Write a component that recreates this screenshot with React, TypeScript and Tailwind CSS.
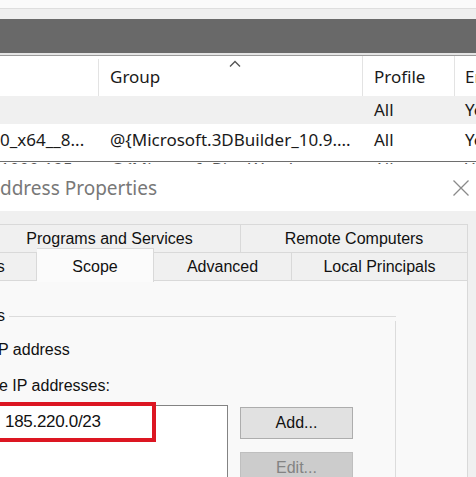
import React from "react";

const seg = "font-['Noto_Sans',sans-serif]";
const dlg = "font-['Liberation_Sans',Arial,sans-serif]";

const rows = [
  { name: "", group: "", profile: "All", enabled: "Yes", bg: "bg-[#f0f0f0]", h: "h-[28px]" },
  { name: "0_x64__8...", group: "@{Microsoft.3DBuilder_10.9....", profile: "All", enabled: "Yes", bg: "bg-white", h: "h-[32px]" },
];

function Cols({ name, group, profile, enabled }: { name: string; group: string; profile: string; enabled: string }) {
  return (
    <>
      <div className="w-[99px] shrink-0 whitespace-nowrap overflow-hidden">{name}</div>
      <div className="w-[264px] shrink-0 pl-[11px] whitespace-nowrap overflow-hidden">{group}</div>
      <div className="w-[92px] shrink-0 pl-[11px] whitespace-nowrap">{profile}</div>
      <div className="shrink-0 pl-[10px] whitespace-nowrap">{enabled}</div>
    </>
  );
}

export default function App() {
  return (
    <div className="w-[476px] h-[477px] overflow-hidden bg-white flex flex-col">
      {/* window chrome above the list */}
      <div className="h-[8px] bg-[#fafafa] shrink-0" />
      <div className="h-px bg-[#dedede] shrink-0" />
      <div className="h-[10px] bg-[#efefef] shrink-0" />
      <div className="h-[34px] bg-[#696969] shrink-0" />
      <div className="h-[2px] bg-[#e4e4e4] shrink-0" />
      <div className="h-px bg-[#9a9a9a] shrink-0" />

      {/* list header */}
      <div className={`h-[40px] shrink-0 flex text-[17px] text-[#1a1a1a] bg-white ${seg}`}>
        <div className="w-[99px] shrink-0 mt-[3px] border-r border-[#e3e3e3]" />
        <div className="w-[264px] shrink-0 pl-[11px] pt-[2px] flex items-center border-r border-[#e3e3e3] relative">
          Group
          <svg className="absolute left-[130px] top-[4px]" width="12" height="7" viewBox="0 0 12 7">
            <path d="M1 6.5 L6 1.5 L11 6.5" fill="none" stroke="#555" strokeWidth="1.4" />
          </svg>
        </div>
        <div className="w-[92px] shrink-0 pl-[11px] pt-[2px] flex items-center border-r border-[#e3e3e3]">Profile</div>
        <div className="shrink-0 pl-[10px] pt-[2px] flex items-center whitespace-nowrap">Enabled</div>
      </div>

      {rows.map((r, i) => (
        <div key={i} className={`${r.h} ${r.bg} shrink-0 flex items-center text-[17px] text-[#1a1a1a] ${seg}`}>
          <Cols {...r} />
        </div>
      ))}

      {/* next row, mostly hidden behind the dialog */}
      <div className="h-[5px] shrink-0 bg-white" />
      <div className="h-px shrink-0 bg-[#6e6e6e]" />
      <div className={`h-[2px] shrink-0 overflow-hidden flex text-[17px] leading-none text-[#555] ${seg}`}>
        <div className="-mt-[2px] flex">
          <Cols name="  1000.195" group="@{Microsoft.BingWeather" profile="All" enabled="Yes" />
        </div>
      </div>
      <div className="h-px shrink-0 bg-white" />

      {/* dialog */}
      <div className="flex-1 flex flex-col bg-[#f0f0f0]">
        <div className="h-[46px] shrink-0 bg-white flex items-center justify-between">
          <span className={`text-[19px] text-[#787878] ${seg}`}>ddress Properties</span>
          <svg className="mr-[7px]" width="16" height="16" viewBox="0 0 16 16">
            <path d="M0.5 0.5 L15.5 15.5 M15.5 0.5 L0.5 15.5" stroke="#8a8a8a" strokeWidth="1.3" />
          </svg>
        </div>

        <div className={`pt-[13px] flex-1 flex flex-col text-[16px] text-[#111] ${dlg}`}>
          {/* back tab row */}
          <div className="h-[28px] shrink-0 flex">
            <div className="-ml-[22px] w-[263px] shrink-0 border border-b-0 border-[#d9d9d9] flex items-center justify-center whitespace-nowrap">
              Programs and Services
            </div>
            <div className="w-[227px] shrink-0 border border-b-0 border-l-0 border-[#d9d9d9] flex items-center justify-center whitespace-nowrap">
              Remote Computers
            </div>
          </div>

          {/* front tab row */}
          <div className="h-[28px] shrink-0 flex items-start">
            <div className="-ml-[167px] w-[204px] h-[28px] shrink-0 border border-b-0 border-[#d9d9d9] flex items-center justify-center whitespace-nowrap">
              Protocols and Ports
            </div>
            <div className="relative z-10 -mt-[4px] w-[117px] h-[34px] shrink-0 bg-[#fbfbfb] border border-b-0 border-l-0 border-[#d9d9d9] flex justify-center pt-[6px]">
              Scope
            </div>
            <div className="w-[138px] h-[28px] shrink-0 border border-b-0 border-l-0 border-[#d9d9d9] flex items-center justify-center">
              Advanced
            </div>
            <div className="w-[176px] h-[28px] shrink-0 border border-b-0 border-l-0 border-[#d9d9d9] flex items-center justify-center whitespace-nowrap">
              Local Principals
            </div>
          </div>

          {/* tab panel */}
          <div className="w-[468px] flex-1 bg-[#f9f9f9] border-t border-r border-[#d9d9d9] pt-[30px]">
            <div className="w-[396px] h-full flex flex-col">
              <div className="h-[10px] flex items-center">
                <span className="leading-none -ml-[3px] pr-[4px]">s</span>
                <div className="flex-1 h-px bg-[#dcdcdc]" />
              </div>
              <div className="flex-1 border-r border-[#dcdcdc]">
                <div className="mt-[19px] h-[20px] leading-[20px] -ml-[2px]">P address</div>
                <div className="mt-[16px] h-[20px] leading-[20px] -ml-[1px]">e IP addresses:</div>
                <div className="mt-[6px] flex gap-[12px]">
                  <div className="w-[228px] h-[90px] mt-[3px] bg-white border border-l-0 border-[#838383]">
                    <div className="-mt-[4px] w-[156px] h-[40px] border-[4px] border-l-0 border-[#dc1622] flex items-center pl-[5px] text-[17px] tracking-[-0.3px]">
                      185.220.0/23
                    </div>
                  </div>
                  <div className="flex flex-col">
                    <div className="mt-[5px] w-[113px] h-[32px] bg-[#e1e1e1] border border-[#adadad] flex items-center justify-center">
                      Add...
                    </div>
                    <div className="mt-[13px] w-[113px] h-[32px] bg-[#cccccc] border border-[#bfbfbf] flex items-center justify-center text-[#838383]">
                      Edit...
                    </div>
                  </div>
                </div>
              </div>
            </div>
          </div>
        </div>
      </div>
    </div>
  );
}
